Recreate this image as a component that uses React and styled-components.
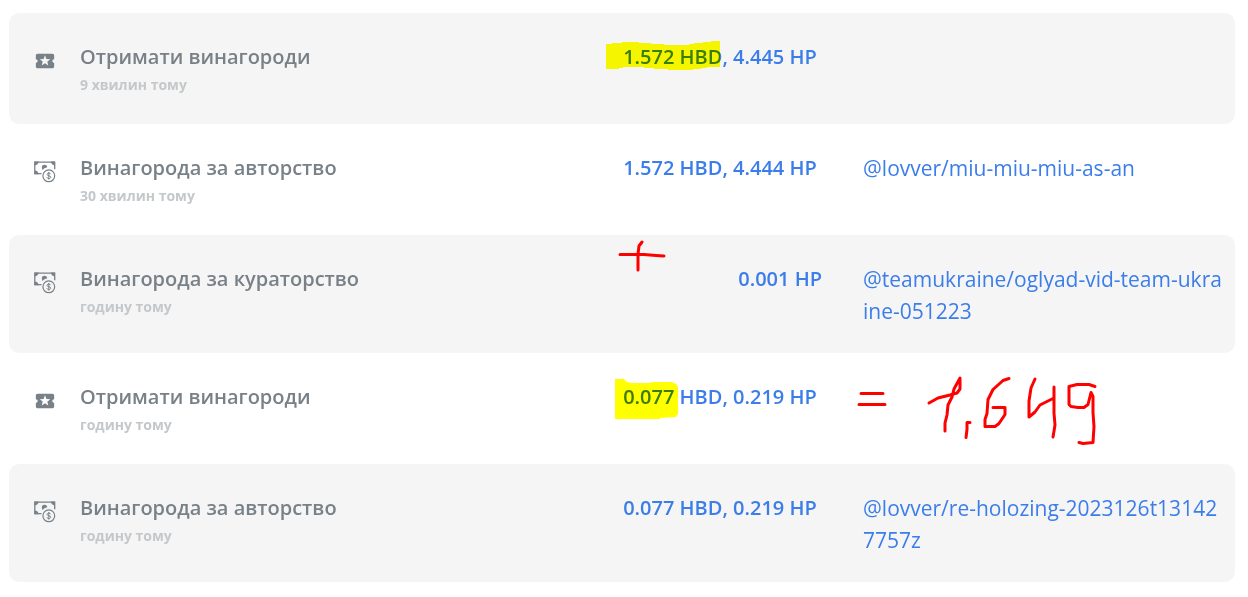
import React from "react";
import styled, { createGlobalStyle } from "styled-components";
import { MdLocalActivity } from "react-icons/md";

const GlobalStyle = createGlobalStyle`
  :root {
    --text-color: #788187;
    --time-color: #c5c8ca;
    --link-color: #3b7de9;
    --row-color: #f5f5f5;
  }
  * {
    box-sizing: border-box;
  }
  body {
    margin: 0;
    background: #fff;
    font-family: "Open Sans", "Noto Sans", sans-serif;
    font-size: 20px;
    line-height: 32px;
  }
`;

const operations = [
  { type: "claim", title: "Отримати винагороди", time: "9 хвилин тому", amounts: ["1.572 HBD", "4.445 HP"] },
  { type: "reward", title: "Винагорода за авторство", time: "30 хвилин тому", amounts: ["1.572 HBD", "4.444 HP"], link: "@lovver/miu-miu-miu-as-an" },
  { type: "reward", title: "Винагорода за кураторство", time: "годину тому", amounts: ["0.001 HP"], link: "@teamukraine/oglyad-vid-team-ukraine-051223" },
  { type: "claim", title: "Отримати винагороди", time: "годину тому", amounts: ["0.077 HBD", "0.219 HP"] },
  { type: "reward", title: "Винагорода за авторство", time: "годину тому", amounts: ["0.077 HBD", "0.219 HP"], link: "@lovver/re-holozing-2023126t131427757z" },
];

const MoneyIcon = () => (
  <svg width="22" height="22" viewBox="0 0 22 22" fill="none" stroke="currentColor">
    <path d="M7.5 12.6H.8V1.2h19.9v7" strokeWidth="1.3" />
    <path d="M.5.6h4.2C4.5 3 3 4.3.5 4.6zM21 .6h-4.2c.2 2.4 1.7 3.7 4.2 4zM.5 13.2V9.4c2.5.2 4 1.5 4.2 3.8z" fill="currentColor" stroke="none" />
    <path d="M8 7.2a2.7 2.7 0 1 1 5.3-.9C11.2 6.7 9.6 7.9 8.7 9A2.7 2.7 0 0 1 8 7.2z" fill="currentColor" stroke="none" />
    <circle cx="14.8" cy="14.8" r="5.9" strokeWidth="1.2" />
    <path d="M16.6 13.2c-.2-.8-.9-1.1-1.8-1.1-1 0-1.8.5-1.8 1.3 0 1.9 3.7.8 3.7 2.8 0 .8-.9 1.3-1.9 1.3s-1.8-.4-1.9-1.3M14.8 11v7.6" strokeWidth="1" />
  </svg>
);

const Operation = ({ type, title, time, amounts, link }) => {
  return (
    <Row>
      <IconCell>{type === "claim" ? <MdLocalActivity size={22} /> : <MoneyIcon />}</IconCell>
      <div>
        <Title>{title}</Title>
        <Time>{time}</Time>
      </div>
      <Amount>
        {amounts.join(", ")}
        {amounts.length > 1 && "\u00a0"}
      </Amount>
      {link && <PostLink href={"#" + link}>{link}</PostLink>}
    </Row>
  );
};

// hand-made marks lying over the list
const Notes = () => (
  <>
    <Marker width="1248" height="597" viewBox="0 0 1248 597" fill="#ff0">
      <path d="M606 44h6v-1h10v-1h17v1h12v1h13v1h25v-1h5v-1h9v-1h8v-1h9v26h-13v1h-6v1h-8v1h-25v-1h-14v-1h-10v-1h-21v1h-4v1h-13z" />
      <path d="M615 379h9l3 3 5 1h19v-1h21l4 2 2 3v27l-2 3-16 1v1h-45z" />
    </Marker>
    <Pen width="1248" height="597" viewBox="0 0 1248 597">
      <path d="M620 254.5h24l12 1 8 .5M642 242l-3 4-1 8v16" />
      <path d="M861 393.5h22M859 404.5h26" />
      <path d="M929 403l9-5 12-3 7-2 3-4v-11l-6 11-2 8-4 8-1 10-2 8v8" />
      <path d="M970 422.5h-3v7l-1 8" />
      <path d="M1009 378.5l-6 2-10 9-3 6-2 4-1 14-2 6v7h10l4-3 6-9v-7h-12" />
      <path d="M1035 379l-4 9-2 13v16l6-5 5-7 14-7M1054 387v26l1 12-2 12" />
      <path d="M1095 386.500l-6-2h-12l-8 2v18l2 2 7 1h6l4-3 2-8 1-4 2 4v16l1 14-1 16-10 1-4-1" />
    </Pen>
  </>
);

const App = () => {
  return (
    <Wallet>
      <GlobalStyle />
      <main>
        {operations.map((operation, index) => (
          <Operation key={index} {...operation} />
        ))}
      </main>
      <Notes />
    </Wallet>
  );
};

const Wallet = styled.div`
  position: relative;
  padding: 13px 13px 14px 9px;
`;

const Row = styled.div`
  display: grid;
  grid-template-columns: 46px 1fr 280px 360px;
  padding: 28px 12px 26px 25px;
  border-radius: 10px;
  &:nth-child(odd) {
    background: var(--row-color);
  }
`;

const IconCell = styled.div`
  padding-top: 9px;
  color: var(--text-color);
  svg {
    display: block;
  }
`;

const Title = styled.div`
  font-weight: 600;
  color: var(--text-color);
`;

const Time = styled.div`
  padding-bottom: 2px;
  font-size: 14px;
  font-weight: 700;
  line-height: 23px;
  color: var(--time-color);
`;

const Amount = styled.div`
  padding-right: 41px;
  font-weight: 600;
  text-align: right;
  white-space: nowrap;
  color: var(--link-color);
`;

const PostLink = styled.a`
  font-size: 21px;
  color: var(--link-color);
  text-decoration: none;
  word-break: break-all;
`;

const Drawing = styled.svg`
  position: absolute;
  top: 0;
  left: 0;
  pointer-events: none;
`;

const Marker = styled(Drawing)`
  mix-blend-mode: multiply;
`;

const Pen = styled(Drawing)`
  fill: none;
  stroke: #f00;
  stroke-width: 3px;
  stroke-linecap: round;
  stroke-linejoin: round;
`;

export default App;
